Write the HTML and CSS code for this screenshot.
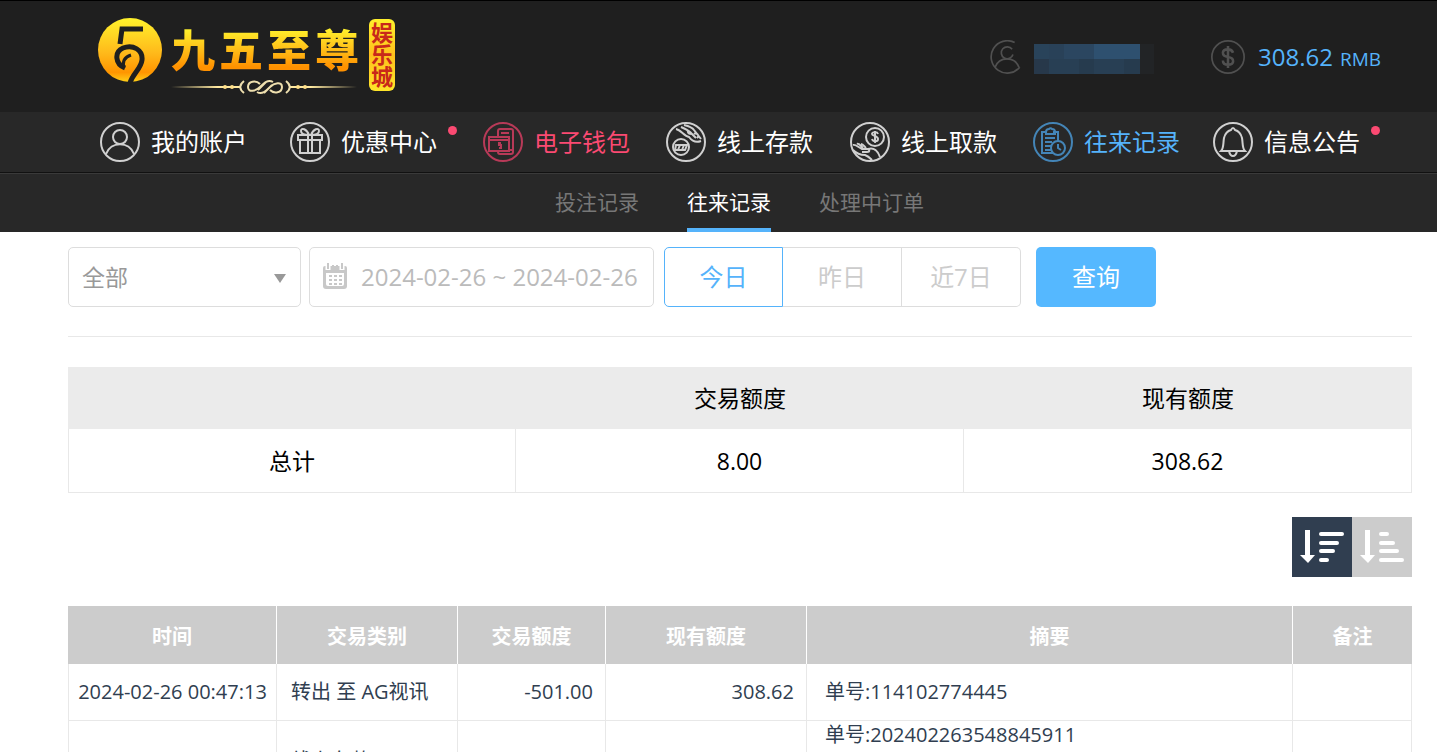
FILE: index.html
```
<!DOCTYPE html>
<html lang="zh-CN">
<head>
<meta charset="utf-8">
<meta name="viewport" content="width=device-width, initial-scale=1">
<title>往来记录</title>
<link rel="stylesheet" href="styles.css">
</head>
<body>
<header class="header">
  <div class="topbar">
    <a class="logo" href="#">
      <svg class="logo-mark" viewBox="0 0 66 66" aria-hidden="true">
        <defs><linearGradient id="gold" x1="0" y1="0" x2="0" y2="1"><stop offset="0" stop-color="#fff22c"/><stop offset=".55" stop-color="#ffb91a"/><stop offset=".85" stop-color="#ff9500"/><stop offset="1" stop-color="#ffd018"/></linearGradient></defs>
        <circle cx="33" cy="33" r="32" fill="url(#gold)"/>
        <g fill="none" stroke="#1f1f1f">
          <path stroke-width="5" d="M46 12H25l-2 15"/>
          <path stroke-width="5" d="M28 51C18 47 17 35 26 31c10-4 20 2 19 12-1 9-9 13-12 23"/>
          <path stroke-width="3" d="M27 51c-2-7 1-11 7-13"/>
        </g>
      </svg>
      <span class="logo-name">
        <span class="logo-text"><span>九</span><span>五</span><span>至</span><span>尊</span></span>
        <svg class="logo-line" viewBox="0 0 186 16" aria-hidden="true">
          <defs><linearGradient id="fade"><stop offset="0" stop-color="#ffe9a0" stop-opacity="0"/><stop offset=".25" stop-color="#ffe9a0"/><stop offset=".75" stop-color="#ffe9a0"/><stop offset="1" stop-color="#ffe9a0" stop-opacity="0"/></linearGradient></defs>
          <path d="M0 7h70v2H0zM118 7h68v2h-68z" fill="url(#fade)"/>
          <g fill="none" stroke="#eedfae" stroke-width="2"><path d="M73 2c-5 4-5 8 0 12M115 2c5 4 5 8 0 12M102 3c-5-3-9 1-13 5s-12 6-12 0 8-7 12-3M86 13c5 3 9-1 13-5s12-6 12 0-8 7-12 3M87 11l8-8M93 14l8-8"/></g>
          <g fill="#ffe08a"><circle cx="54" cy="8" r="2"/><circle cx="61" cy="8" r="2"/><circle cx="127" cy="8" r="2"/><circle cx="134" cy="8" r="2"/></g>
        </svg>
      </span>
      <span class="logo-badge">娱乐城</span>
    </a>
    <div class="account">
      <div class="user">
        <svg class="round-icon" viewBox="0 0 40 40" aria-hidden="true"><path d="M29 3a19 19 0 1 0 6 29"/><path d="M26 11a7 7 0 1 0 1 6"/><path d="M6 32c5-13 23-13 28 0"/></svg>
        <svg class="mask" viewBox="0 0 120 30" aria-hidden="true">
          <path fill="#222426" d="M0 0h120v30H0z"/><path fill="#29435a" d="M0 0h30v15H0z"/><path fill="#294158" d="M15 0h15v15H15z"/><path fill="#2b4660" d="M30 0h30v15H30z"/><path fill="#2e506f" d="M60 0h46v15H60z"/><path fill="#27384a" d="M0 15h15v15H0z"/><path fill="#283f54" d="M15 15h75v15H15z"/><path fill="#263b4e" d="M45 15h15v15H45zM90 15h16v15H90z"/>
        </svg>
      </div>
      <div class="balance">
        <svg class="round-icon" viewBox="0 0 40 40" aria-hidden="true"><circle cx="20" cy="20" r="19"/><path stroke-width="3" d="M26 15c-1-3-3-4-6-4-8 0-8 8 0 9s8 9 0 9c-4 0-6-2-6-5M20 7v26"/></svg>
        <span class="amount">308.62</span><span class="currency">RMB</span>
      </div>
    </div>
  </div>
  <nav class="nav" aria-label="主导航">
    <a href="#"><svg viewBox="0 0 40 40" aria-hidden="true"><circle cx="20" cy="20" r="19"/><circle cx="20" cy="15" r="7"/><path d="M6 32c5-13 23-13 28 0"/></svg><span>我的账户</span></a>
    <a href="#"><svg viewBox="0 0 40 40" aria-hidden="true"><circle cx="20" cy="20" r="19"/><path d="M8 13h24v5H8zM10 18v13h20V18M18 13v18M22 13v18M19 13c-2-6-8-8-8-4 0 3 4 4 8 4zM21 13c2-6 8-8 8-4 0 3-4 4-8 4z"/></svg><span class="has-dot">优惠中心</span></a>
    <a class="wallet" href="#"><svg viewBox="0 0 40 40" aria-hidden="true"><circle cx="20" cy="20" r="19"/><path d="M15 14V9q0-2 2-2h11q2 0 2 2v21q0 2-2 2H17q-2 0-2-2v-1M6 15h20v14H6zM6 18h20M18 11h8M18 21h-2v2h2v3h-2M27 28h3"/></svg><span>电子钱包</span></a>
    <a href="#"><svg viewBox="0 0 40 40" aria-hidden="true"><circle cx="20" cy="20" r="19"/><circle cx="15" cy="25" r="8"/><path d="M10 23h11l-2 5H9zM12 28l2-5M16 28l2-5M10 7c5 1 8 7 13 8 3 4 7 6 12 4M18 3c4 1 8 2 10 5l7 9M15 5c4 2 8 3 11 7l4 4M22 8c-1 3 1 4 4 4M28 12c3-2 6 2 3 4"/></svg><span>线上存款</span></a>
    <a href="#"><svg viewBox="0 0 40 40" aria-hidden="true"><circle cx="20" cy="20" r="19"/><circle cx="25" cy="15" r="9"/><path d="M28 12c-1-3-6-2-6 0s6 2 6 5-5 3-6 0M25 9v12M3 23c3-1 6 3 9 4h5c3 0 3 3 0 3h-5M7 22c2-1 4 2 6 4M11 22c2 0 3 2 5 4M18 27c6-2 10 2 12 8M3 28c4 4 7 5 12 5 3 1 5 3 7 5"/></svg><span>线上取款</span></a>
    <a class="current" href="#"><svg viewBox="0 0 40 40" aria-hidden="true"><circle cx="20" cy="20" r="19"/><path d="M14 10H9v21h11M20 10h5v9M13 10q0-3 3-3a2 2 0 0 1 3 0q3 0 3 3v2h-9zM12 16h10M12 20h7M12 24h6M12 28h6"/><circle cx="25" cy="26" r="7"/><path d="M25 22v4l3 2"/></svg><span>往来记录</span></a>
    <a href="#"><svg viewBox="0 0 40 40" aria-hidden="true"><circle cx="20" cy="20" r="19"/><path d="M8 29c3-3 2-8 3-13 1-4 3-7 7-8q2-4 4 0c4 1 6 4 7 8 1 5 0 10 3 13zM16 29q1 5 4 5t4-5"/></svg><span class="has-dot">信息公告</span></a>
  </nav>
  <nav class="subnav" aria-label="记录">
    <a href="#">投注记录</a>
    <a class="active" href="#">往来记录</a>
    <a href="#">处理中订单</a>
  </nav>
</header>
<main class="content">
  <form class="filters">
    <div class="select-box">
      <select aria-label="类别"><option>全部</option></select>
    </div>
    <label class="date-box">
      <svg viewBox="0 0 26 32" aria-hidden="true"><path fill="#c8c8c8" d="M3 6h20q2 0 2 2v18q0 3-3 3H4q-3 0-3-3V8q0-2 2-2z"/><path fill="#fff" d="M4 13h18v11q0 2-2 2H6q-2 0-2-2z"/><path stroke="#fff" stroke-width="5" d="M6 4v6M20 4v6"/><path stroke="#c8c8c8" stroke-width="2" d="M6 3v6M20 3v6M11 5v4M15 5v4"/><path stroke="#c8c8c8" stroke-width="2" stroke-dasharray="3 2" d="M7 16h13M7 20h13M7 24h13"/></svg>
      <input type="text" aria-label="日期" value="2024-02-26 ~ 2024-02-26">
    </label>
    <div class="range">
      <button class="selected" type="button">今日</button>
      <button type="button">昨日</button>
      <button type="button">近7日</button>
    </div>
    <button class="search" type="button">查询</button>
  </form>
  <table class="summary">
    <thead><tr><td></td><th scope="col">交易额度</th><th scope="col">现有额度</th></tr></thead>
    <tbody><tr><th scope="row">总计</th><td>8.00</td><td>308.62</td></tr></tbody>
  </table>
  <div class="sort">
    <button class="sort-on" type="button" aria-label="降序"><svg viewBox="0 0 60 60" aria-hidden="true"><path fill="#fff" d="M13 13h5v25h5l-7 8-8-8h5z"/><path stroke="#fff" stroke-width="4" stroke-linecap="round" d="M29 17h21M29 26h16M29 34h12M29 43h6"/></svg></button>
    <button type="button" aria-label="升序"><svg viewBox="0 0 60 60" aria-hidden="true"><path fill="#fff" d="M13 13h5v25h5l-7 8-8-8h5z"/><path stroke="#fff" stroke-width="4" stroke-linecap="round" d="M29 17h6M29 26h12M29 34h16M29 43h21"/></svg></button>
  </div>
  <table class="records">
    <colgroup><col class="c-time"><col class="c-type"><col class="c-sum"><col class="c-rest"><col><col class="c-note"></colgroup>
    <thead><tr><th scope="col">时间</th><th scope="col">交易类别</th><th scope="col">交易额度</th><th scope="col">现有额度</th><th scope="col">摘要</th><th scope="col">备注</th></tr></thead>
    <tbody>
      <tr><td class="time">2024-02-26 00:47:13</td><td class="type">转出 至 AG视讯</td><td class="num">-501.00</td><td class="num">308.62</td><td class="detail">单号:114102774445</td><td></td></tr>
      <tr class="tall"><td></td><td class="type">线上存款</td><td></td><td></td><td class="detail">单号:202402263548845911</td><td></td></tr>
    </tbody>
  </table>
</main>
</body>
</html>
```
FILE: styles.css
```
* { box-sizing: border-box; }
html { scrollbar-width: none; }
body {
  margin: 0;
  background: #fff;
  color: #000;
  font-family: "Open Sans", "Noto Sans CJK SC", sans-serif;
}
a { color: inherit; text-decoration: none; }
button, input, select { font: inherit; margin: 0; }
svg { display: block; flex: none; }

.header { background: #282828; }
.topbar {
  display: flex;
  justify-content: space-between;
  height: 112px;
  padding: 0 56px 0 97px;
  background: #1f1f1f;
  border-top: 1px solid #000;
}
.logo { display: flex; align-items: flex-start; padding-top: 16px; }
.logo-mark { width: 66px; height: 66px; }
.logo-name { display: flex; flex-direction: column; margin-left: 8px; padding-top: 7px; }
.logo-text {
  display: flex;
  gap: 4px;
  font: 900 44px/48px "Noto Sans CJK SC", sans-serif;
  color: transparent;
  background: linear-gradient(#fff22c 10%, #ffc21a 50%, #ff9100 90%);
  -webkit-background-clip: text;
  background-clip: text;
}
.logo-line { width: 186px; height: 16px; margin-top: 7px; }
.logo-badge {
  margin: 2px 0 0 10px;
  padding: 3px 0;
  border-radius: 6px;
  background: linear-gradient(#fff02c, #ffbf1c 50%, #ffe52a);
  color: #c8281a;
  font: 700 22px/26px "Noto Sans CJK SC", sans-serif;
  writing-mode: vertical-rl;
}
.account { display: flex; align-items: center; gap: 57px; color: #55b3fb; }
.user, .balance { display: flex; align-items: center; }
.round-icon { width: 34px; height: 34px; fill: none; stroke: #505050; stroke-width: 2; }
.mask { width: 120px; height: 30px; margin: 4px 0 0 10px; }
.amount { margin-left: 13px; font-size: 24px; }
.currency { margin-left: 7px; padding-top: 4px; font-size: 19px; }

.nav {
  display: grid;
  grid-template-columns: 190fr 193fr 183fr 184fr 183fr 180fr 168fr;
  height: 60px;
  padding: 0 56px 0 100px;
  color: #fff;
  font-size: 24px;
  line-height: 36px;
}
.nav a { display: flex; align-items: center; gap: 11px; white-space: nowrap; }
.nav svg { width: 40px; height: 40px; fill: none; stroke: #d0d0d0; stroke-width: 2; }
.nav .wallet { color: #fb4a72; }
.nav .wallet svg { stroke: #b83a58; }
.nav .current { color: #55b3fb; }
.nav .current svg { stroke: #4485b7; }
.has-dot { position: relative; }
.has-dot::after {
  content: "";
  position: absolute;
  top: 2px;
  right: -20px;
  width: 9px;
  height: 9px;
  border-radius: 50%;
  background: #fb4a72;
}
.subnav {
  display: flex;
  justify-content: center;
  gap: 48px;
  height: 60px;
  padding: 0 25px 0 67px;
  border-top: 1px solid #111;
  box-shadow: inset 0 1px #3a3a3a;
  color: #777;
  font-size: 21px;
  line-height: 58px;
}
.subnav .active { color: #fff; border-bottom: 4px solid #55b3fb; }

.content { padding: 15px 25px 0 68px; }
.filters {
  display: flex;
  height: 90px;
  align-items: flex-start;
  border-bottom: 1px solid #e8e8e8;
}
.select-box { position: relative; width: 233px; }
.select-box::after {
  content: "";
  position: absolute;
  right: 15px;
  top: 27px;
  border: 6px solid transparent;
  border-top: 9px solid #999;
  border-bottom: 0;
}
.select-box select {
  appearance: none;
  width: 100%;
  height: 60px;
  padding: 0 13px;
  border: 1px solid #ddd;
  border-radius: 5px;
  background: #fff;
  color: #999;
  font-size: 23px;
}
.date-box {
  display: flex;
  align-items: center;
  width: 345px;
  height: 60px;
  margin-left: 8px;
  padding: 0 0 2px 12px;
  border: 1px solid #ddd;
  border-radius: 5px;
}
.date-box svg { width: 26px; height: 32px; }
.date-box input {
  flex: 1;
  min-width: 0;
  height: 50px;
  margin-left: 13px;
  padding: 0;
  border: 0;
  outline: 0;
  background: none;
  color: #bbb;
  font-size: 24px;
}
.range { display: flex; margin-left: 10px; }
.range button {
  width: 119px;
  height: 60px;
  padding: 0 0 3px;
  border: 1px solid #ddd;
  border-left: 0;
  background: #fff;
  color: #ccc;
  font-size: 24px;
}
.range button:last-child { border-radius: 0 5px 5px 0; }
.range .selected { border: 1px solid #55b3fb; border-radius: 5px 0 0 5px; color: #55b3fb; }
.search {
  width: 120px;
  height: 60px;
  margin-left: 15px;
  padding: 0 0 3px;
  border: 0;
  border-radius: 5px;
  background: #55b8ff;
  color: #fff;
  font-size: 24px;
}

table { width: 100%; border-collapse: separate; border-spacing: 0; table-layout: fixed; }
th, td { padding: 0; }
tbody th, tbody td { border-right: 1px solid #e8e8e8; border-bottom: 1px solid #e8e8e8; }
tbody th:first-child, tbody td:first-child { border-left: 1px solid #e8e8e8; }
.summary { margin-top: 30px; font-size: 23px; line-height: 32px; text-align: center; }
.summary th { font-weight: 400; }
.summary thead { background: #ebebeb; }
.summary thead tr { height: 62px; }
.summary tbody tr { height: 64px; }

.sort { display: flex; justify-content: flex-end; margin-top: 24px; }
.sort button { width: 60px; height: 60px; padding: 0; border: 0; background: #ccc; }
.sort .sort-on { background: #303e50; }

.records { margin-top: 29px; font-size: 20px; line-height: 28px; color: #303e50; }
.c-time { width: 209px; }
.c-type { width: 181px; }
.c-sum { width: 148px; }
.c-rest { width: 201px; }
.c-note { width: 119px; }
.records thead tr { height: 58px; background: #ccc; color: #fff; }
.records thead th { padding-top: 3px; border-right: 1px solid #fff; font-weight: 700; }
.records thead th:last-child { border-right: 0; }
.records td { white-space: nowrap; }
.records tbody tr { height: 57px; }
.records tbody .tall { height: 80px; }
.records .time { text-align: center; }
.records .type { padding-left: 14px; }
.records .num { padding-right: 12px; text-align: right; }
.records .detail { padding-left: 18px; }
.tall .detail { vertical-align: top; }
```
